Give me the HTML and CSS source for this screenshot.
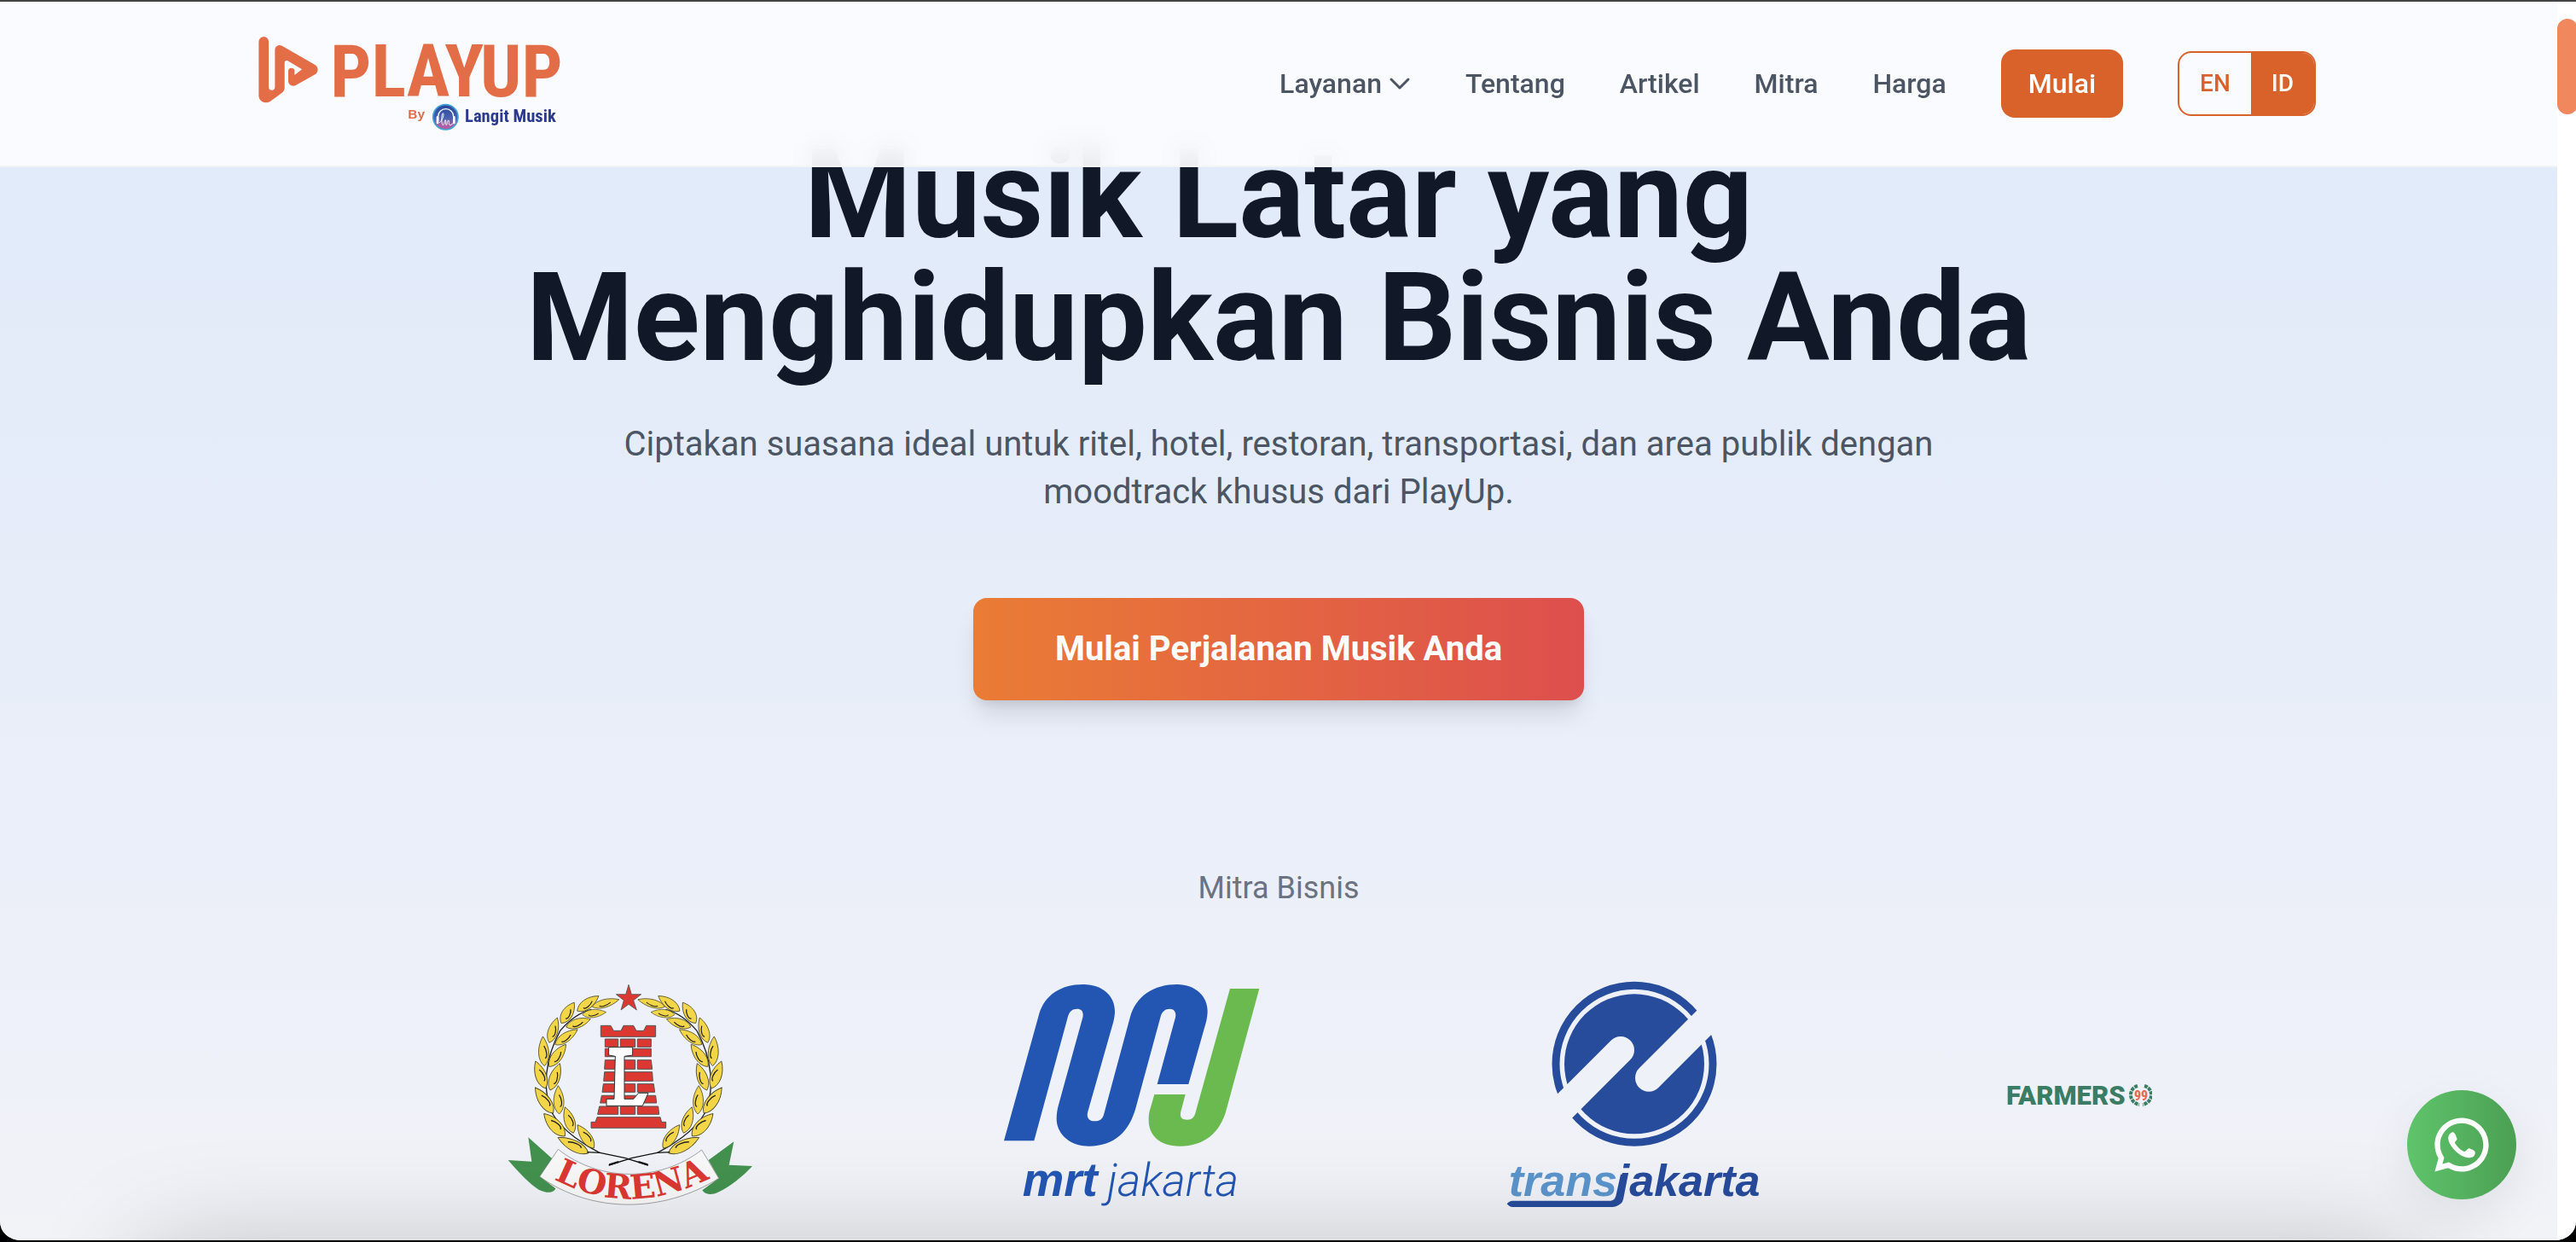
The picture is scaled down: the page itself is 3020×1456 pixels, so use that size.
FILE: index.html
```html
<!DOCTYPE html>
<html lang="id">
<head>
<meta charset="utf-8">
<meta name="viewport" content="width=device-width, initial-scale=1">
<title>PlayUp by Langit Musik</title>
<link rel="stylesheet" href="styles.css">
</head>
<body>
<div class="window">
  <div class="page">
    <header class="header">
      <div class="header-inner">
        <a class="brand" href="#" aria-label="PlayUp by Langit Musik">
          <svg class="brand-logo" viewBox="9 9 1170 450">
            <defs>
              <linearGradient id="lm" x1="0" y1="0" x2="0" y2="1">
                <stop offset="0" stop-color="#27459b"/><stop offset=".55" stop-color="#4a63ae"/><stop offset=".8" stop-color="#a860a8"/><stop offset="1" stop-color="#b85aa0"/>
              </linearGradient>
            </defs>
            <path class="coral" d="M88 69A18 18 0 0 1 105 87V246A11 11 0 0 0 127 246V116C127 102 140 95 152 101L268 168C281 176 281 194 268 202L200 240C188 246 174 238 174 226V190A11 11 0 0 1 196 190V204L222 184L172 154C166 151 161 154 161 160V248C161 255 158 262 150 268L110 297C92 307 70 296 70 276V87A18 18 0 0 1 88 69Z"/>
            <text class="logo-word coral" x="322" y="278">PLAYUP</text>
            <text class="logo-by coral" x="595" y="356">By</text>
            <circle cx="727" cy="352" r="44" fill="url(#lm)" stroke="#3fa3d8" stroke-width="5"/>
            <path d="M701 366V350A27 27 0 0 1 755 350V366" fill="none" stroke="#fff" stroke-width="4"/>
            <path d="M699 352V372M757 352V372" stroke="#fff" stroke-width="8" stroke-linecap="round"/>
            <path d="M704 372C716 366 724 340 718 338C712 338 712 380 718 380C724 380 722 362 727 362C730 364 726 380 730 380C734 378 733 362 738 363C741 366 736 382 744 380C750 378 750 374 756 374" fill="none" stroke="#fff" stroke-width="3"/>
            <text class="logo-sub" x="795" y="370">Langit Musik</text>
          </svg>
        </a>
        <nav class="nav" aria-label="Utama">
          <button class="nav-link" type="button" aria-haspopup="true">Layanan
            <svg class="chevron" viewBox="0 0 24 24"><path d="M2 7L12 17L22 7"/></svg>
          </button>
          <a class="nav-link" href="#">Tentang</a>
          <a class="nav-link" href="#">Artikel</a>
          <a class="nav-link" href="#">Mitra</a>
          <a class="nav-link" href="#">Harga</a>
          <button class="start" type="button">Mulai</button>
          <div class="lang">
            <button class="lang-option" type="button">EN</button>
            <button class="lang-option lang-active" type="button">ID</button>
          </div>
        </nav>
      </div>
    </header>

    <main class="hero">
      <h1 class="title">Musik Latar yang<br>Menghidupkan Bisnis Anda</h1>
      <p class="lead">Ciptakan suasana ideal untuk ritel, hotel, restoran, transportasi, dan area publik dengan moodtrack khusus dari PlayUp.</p>
      <button class="cta" type="button">Mulai Perjalanan Musik Anda</button>

      <h2 class="partners-title">Mitra Bisnis</h2>
      <div class="partners">
        <svg class="partner" viewBox="-9 0 1080 930" role="img" aria-label="Lorena">
          <defs>
            <g id="leaf">
              <path d="M-50 0C-30 -25 14 -25 50 0C14 25 -30 25 -50 0Z" fill="#f3d648" stroke="#4a4625" stroke-width="2.5"/>
              <path d="M-24 4C-22 14 4 12 18 2" fill="none" stroke="#222" stroke-width="4"/>
            </g>
            <g id="branch">
              <path d="M430 665C380 640 300 590 262 525C225 440 238 330 290 235C320 200 360 170 400 160" fill="none" stroke="#222" stroke-width="4"/>
              <use href="#leaf" transform="translate(388 139) rotate(-35) scale(.92)"/>
              <use href="#leaf" transform="translate(450 138) rotate(-15) scale(.98 .75)"/>
              <use href="#leaf" transform="translate(410 174) rotate(-6) scale(.84 .75)"/>
              <use href="#leaf" transform="translate(317 172) rotate(-58) scale(.86 1)"/>
              <use href="#leaf" transform="translate(354 208) rotate(-18) scale(.9 .85)"/>
              <use href="#leaf" transform="translate(266 233) rotate(-72) scale(.92 .9)"/>
              <use href="#leaf" transform="translate(312 257) rotate(-34) scale(.95 .85)"/>
              <use href="#leaf" transform="translate(232 307) rotate(-93) scale(1.04 .95)"/>
              <use href="#leaf" transform="translate(281 322) rotate(-53) scale(.98 .95)"/>
              <use href="#leaf" transform="translate(221 390) rotate(-110) scale(1.02 1)"/>
              <use href="#leaf" transform="translate(272 397) rotate(-70) scale(1 .95)"/>
              <use href="#leaf" transform="translate(234 480) rotate(-125) scale(1.1 1.05)"/>
              <use href="#leaf" transform="translate(285 478) rotate(-92) scale(1 .95)"/>
              <use href="#leaf" transform="translate(270 566) rotate(-133) scale(1.08 1.1)"/>
              <use href="#leaf" transform="translate(322 549) rotate(-108) scale(.96 .95)"/>
              <use href="#leaf" transform="translate(336 638) rotate(-153) scale(1.2 1)"/>
              <use href="#leaf" transform="translate(380 607) rotate(-125) scale(1 .95)"/>
              <path d="M385 662L430 664L520 683L600 708" fill="none" stroke="#111" stroke-width="4"/>
              <path d="M565 696L598 706" stroke="#111" stroke-width="7"/>
            </g>
            <path id="ribbon-line" d="M229 734Q530 919 856 732"/>
          </defs>
          <use href="#branch"/>
          <use href="#branch" transform="translate(1061 0) scale(-1 1)"/>
          <path d="M531 73L541 107H575L548 128L559 162L531 142L504 162L514 128L487 107H521Z" fill="#dc3832" stroke="#555" stroke-width="2.5"/>
          <g fill="#dc3832" stroke="#555" stroke-width="3">
            <path d="M433 217H468L478 235H504L513 217H548L558 235H584L593 217H626V256H433Z"/>
            <path d="M448 264H494V292H448ZM502 264H554V292H502ZM562 264H610V292H562ZM448 298H610V326H448ZM448 338H490V370H446ZM500 338H554V370H500ZM562 338H610L614 370H562ZM446 380H614L616 412H443ZM442 422H490V451H438ZM500 422H554V451H500ZM562 422H619L623 451H562ZM436 463H626L629 489H431ZM428 501H494V529H422ZM502 501H554V529H502ZM562 501H635L638 529H562ZM420 539H642L647 556H662V577H399V556H414Z"/>
          </g>
          <path d="M461 293H545V321L516 325V475H548L566 454H600L580 499H453V475H480L484 325L461 321Z" fill="#fff" stroke="#333" stroke-width="3"/>
          <path d="M178 610L262 685L222 750L274 790C268 808 240 806 215 794C185 775 150 740 107 690L190 695Z" fill="#43914f"/>
          <path d="M901 625L812 690L848 754L790 796C800 814 825 812 845 803C885 785 930 750 966 711L884 707Z" fill="#43914f"/>
          <path d="M283 652C430 768 640 768 788 654L848 754C650 878 400 878 218 748Z" fill="#f8f8f9" stroke="#777" stroke-width="2"/>
          <text class="lorena"><textPath href="#ribbon-line" startOffset="50%" text-anchor="middle">LORENA</textPath></text>
        </svg>

        <svg class="partner" viewBox="-9 0 1080 930" role="img" aria-label="MRT Jakarta">
          <path fill="#2356b3" d="M81 622L205 175C225 110 280 72 360 72C430 72 471 115 471 165C471 180 469 190 466 203L376 520C370 540 380 553 400 553C418 553 428 545 432 530L524 190C545 110 610 72 690 72C755 72 797 115 797 165C797 178 795 190 793 200L730 423H620L684 188C688 170 680 158 664 158C648 158 636 168 632 185L545 505C522 590 470 641 380 641C310 641 266 595 266 545C266 530 268 515 271 503L358 188C362 170 355 158 338 158C322 158 311 167 306 185L187 622Z"/>
          <path fill="#6aba50" d="M610 459H719L703 520C698 540 708 548 725 548C742 548 750 540 754 525L876 87H979L864 510C842 595 785 641 700 641C625 641 590 600 590 550C590 530 592 520 596 508Z"/>
          <text class="mrt-bold" x="146" y="816">mrt</text>
          <text class="mrt-light" x="445" y="816">jakarta</text>
        </svg>

        <svg class="partner" viewBox="-9 0 1080 930" role="img" aria-label="Transjakarta">
          <mask id="tj-cut">
            <rect width="1080" height="930" fill="#fff"/>
            <path d="M480 303L150 633M579 401L910 70" stroke="#000" stroke-width="96" stroke-linecap="round"/>
          </mask>
          <g mask="url(#tj-cut)" fill="#274c9c">
            <circle cx="528" cy="352" r="246"/>
            <circle cx="528" cy="352" r="276" fill="none" stroke="#274c9c" stroke-width="27"/>
          </g>
          <text class="tj" x="86" y="815"><tspan fill="#5b95cd">trans</tspan><tspan fill="#274c9c">jakarta</tspan></text>
          <path d="M80 844Q88 833 100 833H440C455 833 461 826 464 812L480 740H505L486 825C480 845 470 855 450 855H100Q88 855 80 844Z" fill="#274c9c"/>
        </svg>

        <svg class="partner-small" viewBox="0 0 172 40" role="img" aria-label="Farmers 99">
          <text class="farmers" x="1" y="30">FARMERS</text>
          <g fill="none" stroke="#3b7d64" stroke-width="4" stroke-dasharray="4 1">
            <path d="M155 8C144 11 144 27 157 30"/><path d="M163 8C174 11 174 27 161 30"/>
          </g>
          <text class="farmers-99" x="159" y="25">99</text>
        </svg>
      </div>
      <div class="preview"></div>
    </main>

    <a class="whatsapp" href="#" aria-label="WhatsApp">
      <svg class="whatsapp-icon" viewBox="206 192 226 226">
        <path transform="translate(206.2 192.2) scale(9.4)" d="M7.25361 18.4944L7.97834 18.917C9.18909 19.623 10.5651 20 12.001 20C16.4193 20 20.001 16.4183 20.001 12C20.001 7.58172 16.4193 4 12.001 4C7.5827 4 4.00098 7.58172 4.00098 12C4.00098 13.4363 4.37821 14.8128 5.08466 16.0238L5.50704 16.7478L4.85355 19.1494L7.25361 18.4944ZM2.00516 22L3.35712 17.0315C2.49494 15.5536 2.00098 13.8345 2.00098 12C2.00098 6.47715 6.47813 2 12.001 2C17.5238 2 22.001 6.47715 22.001 12C22.001 17.5228 17.5238 22 12.001 22C10.1671 22 8.44851 21.5064 6.97086 20.6447L2.00516 22Z"/>
        <path d="M288 261C278 263 272 272 272 284C274 305 300 335 325 346C345 354 366 352 366 332C366 326 352 320 345 318C338 318 336 328 328 329C318 326 298 308 295 297C296 292 303 290 303 284C300 276 296 262 288 261Z"/>
      </svg>
    </a>
  </div>
  <div class="scrollbar"><div class="thumb"></div></div>
</div>
</body>
</html>
```
FILE: styles.css
```css
* { box-sizing: border-box; }

body {
  margin: 0;
  background: #000;
  font-family: Roboto, "Liberation Sans", sans-serif;
  color: #111827;
}

button { font-family: inherit; border: 0; margin: 0; cursor: pointer; }
a { text-decoration: none; }

.window {
  display: flex;
  height: 100vh;
  overflow: hidden;
  border-top: 2px solid #444;
  border-bottom: 2px solid #000;
  border-radius: 0 0 24px 24px;
  background: #fff;
}

.page {
  position: relative;
  flex: 1;
  overflow: hidden;
  background: linear-gradient(#e0eafb, #e4ecf9 33%, #edf0f9 78%, #f1f3f7);
}

.scrollbar { flex: none; width: 22px; padding-top: 20px; background: #fff; overflow: hidden; }
.thumb { width: 24px; height: 112px; border-radius: 12px; background: #f0875d; }

/* Header */
.header {
  position: absolute;
  z-index: 2;
  top: 0;
  left: 0;
  right: 0;
  border-bottom: 2px solid #f3f4f6;
  background: rgba(253, 253, 255, 0.9);
  backdrop-filter: blur(16px);
}

.header-inner {
  display: flex;
  align-items: center;
  justify-content: space-between;
  max-width: 2432px;
  height: 192px;
  margin: 0 auto;
}

.brand { display: block; }
.brand-logo { display: block; width: 390px; height: 150px; }
.coral { fill: #e36d47; }
.logo-word { font: 700 254px "Roboto Condensed", Roboto, sans-serif; }
.logo-by { font: 700 46px "Liberation Sans", sans-serif; }
.logo-sub { font: 700 62px "Roboto Condensed", "Open Sans", sans-serif; fill: #2b3a8f; }

.nav { display: flex; align-items: center; gap: 64px; }
.nav-link {
  display: flex;
  align-items: center;
  gap: 8px;
  padding: 0;
  background: none;
  font-size: 32px;
  font-weight: 500;
  line-height: 48px;
  color: #4b5563;
}
.chevron { width: 26px; height: 24px; fill: none; stroke: #4b5563; stroke-width: 3; stroke-linecap: round; stroke-linejoin: round; }

.start {
  padding: 16px 32px;
  border-radius: 16px;
  background: #d9622b;
  color: #fff;
  font-size: 32px;
  font-weight: 500;
  line-height: 48px;
}

.lang { display: flex; overflow: hidden; border: 2px solid #d9622b; border-radius: 16px; }
.lang-option {
  padding: 16px 24px;
  background: none;
  color: #d9622b;
  font-size: 28px;
  font-weight: 500;
  line-height: 40px;
}
.lang-active { background: #d9622b; color: #fff; }

/* Hero */
.hero {
  display: flex;
  flex-direction: column;
  align-items: center;
  padding-top: 155px;
  text-align: center;
}

.title { margin: 0; font-size: 144px; font-weight: 700; line-height: 144px; }

.lead {
  max-width: 1600px;
  margin: 48px 0 96px;
  font-size: 40px;
  line-height: 56px;
  color: #4b5563;
}

.cta {
  padding: 32px 96px;
  border-radius: 16px;
  background: linear-gradient(90deg, #ea7c35, #dd4f4d);
  box-shadow: 0 20px 30px -6px rgba(0, 0, 0, 0.12), 0 8px 12px -4px rgba(0, 0, 0, 0.08);
  color: #fff;
  font-size: 40px;
  font-weight: 700;
  line-height: 56px;
}

.partners-title {
  margin: 192px 0 61px;
  font-size: 36px;
  font-weight: 400;
  line-height: 56px;
  color: #6b7280;
}

.partners {
  display: grid;
  grid-template-columns: 524fr 524fr 524fr 278fr;
  align-items: center;
  justify-items: center;
  gap: 66px;
  width: 100%;
  max-width: 2048px;
}
.partner { width: 360px; height: 310px; }
.partner-small { width: 172px; height: 40px; justify-self: end; }

.lorena { font: 700 118px "DejaVu Serif", serif; fill: #dc3832; }
.mrt-bold { font: italic 700 164px "Liberation Sans", sans-serif; fill: #2356b3; }
.mrt-light { font: italic 300 158px Roboto, sans-serif; fill: #2356b3; }
.tj { font: italic 700 156px "Liberation Sans", sans-serif; }
.farmers { font: 900 31px Roboto, sans-serif; fill: #3b7d64; }
.farmers-99 { font: 700 16px "Roboto Condensed", Roboto, sans-serif; fill: #e8674f; text-anchor: middle; }

.preview {
  flex: none;
  width: calc(100% - 340px);
  height: 800px;
  margin-top: 32px;
  border-radius: 32px;
  background: #fff;
  box-shadow: 0 0 130px rgba(0, 0, 0, 0.25);
}

/* Floating chat button */
.whatsapp {
  position: absolute;
  right: 48px;
  bottom: 48px;
  display: flex;
  align-items: center;
  justify-content: center;
  width: 128px;
  height: 128px;
  border-radius: 50%;
  background: linear-gradient(90deg, #5fc46b, #4b9f53);
  box-shadow: 0 20px 60px rgba(0, 0, 0, 0.08);
}
.whatsapp-icon { width: 76px; height: 76px; fill: #fff; }
```
